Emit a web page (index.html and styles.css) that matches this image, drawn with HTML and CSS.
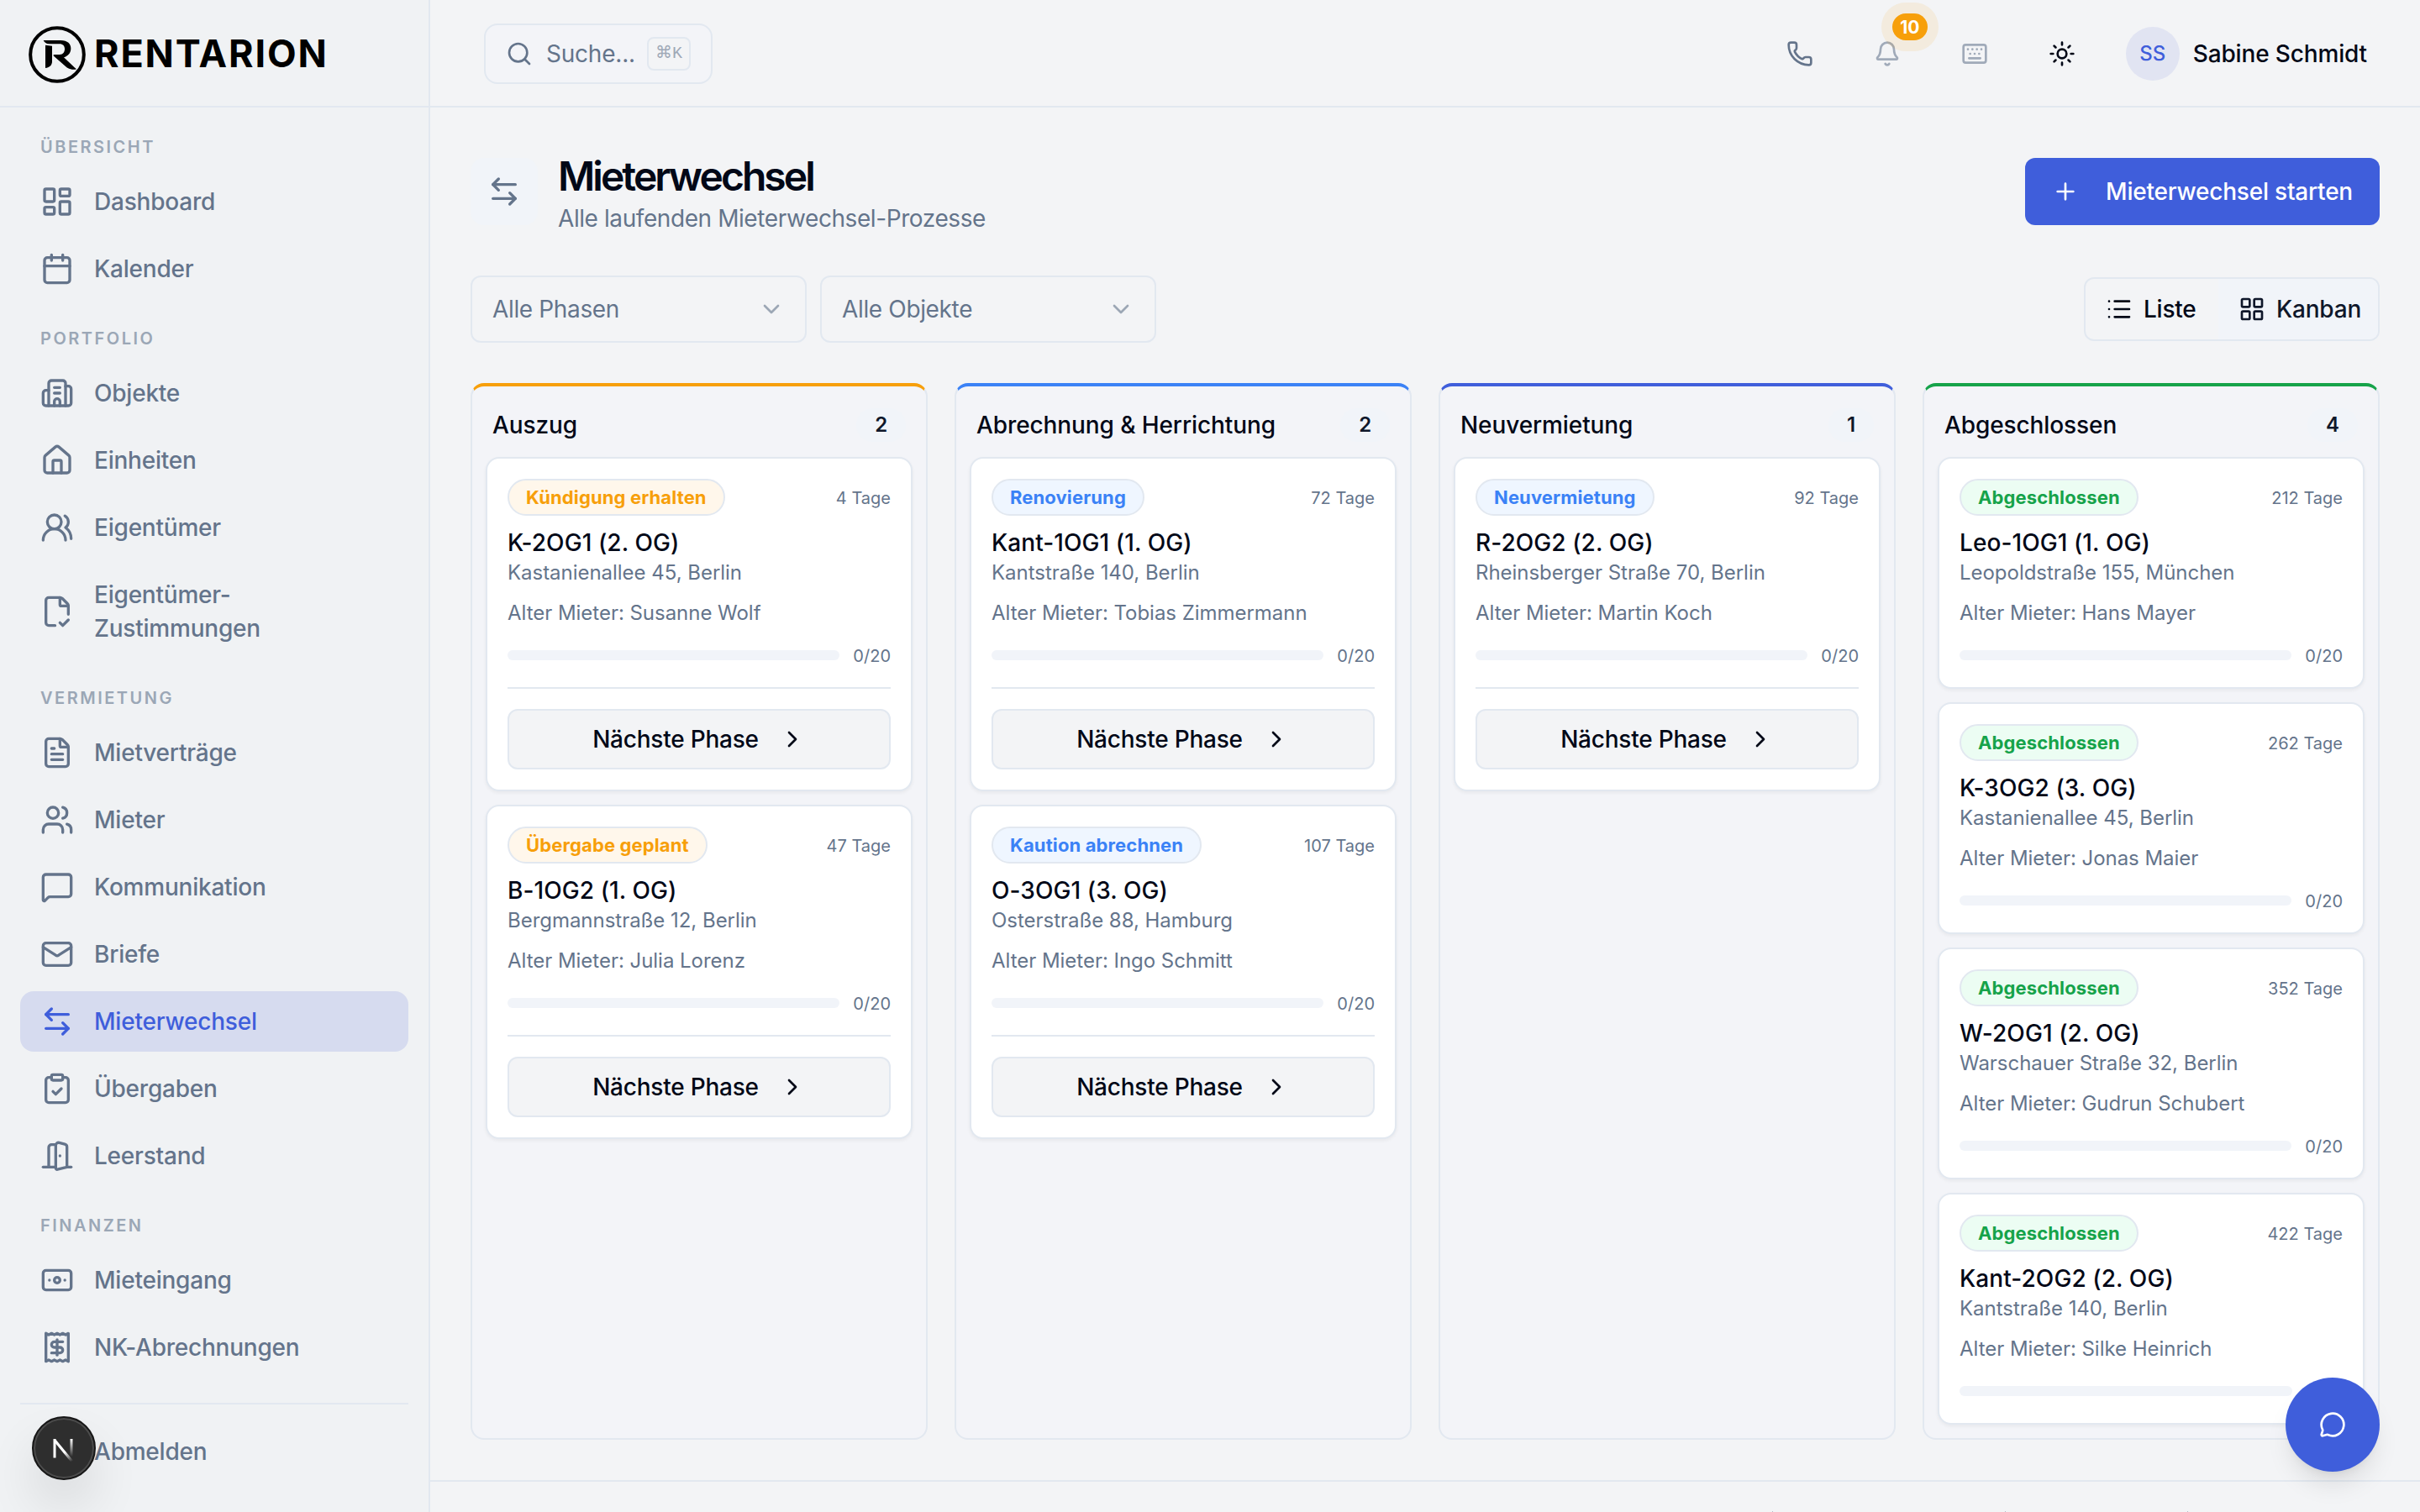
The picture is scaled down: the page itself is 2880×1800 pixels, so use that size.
FILE: index.html
```html
<!DOCTYPE html>
<html lang="de">
<head>
<meta charset="utf-8">
<title>Mieterwechsel – Rentarion</title>
<link rel="stylesheet" href="styles.css">
</head>
<body>
<svg class="sprite" aria-hidden="true">
  <symbol id="i-dashboard" viewBox="0 0 24 24"><rect width="7" height="9" x="3" y="3" rx="1"/><rect width="7" height="5" x="14" y="3" rx="1"/><rect width="7" height="9" x="14" y="12" rx="1"/><rect width="7" height="5" x="3" y="16" rx="1"/></symbol>
  <symbol id="i-calendar" viewBox="0 0 24 24"><path d="M8 2v4M16 2v4"/><rect width="18" height="18" x="3" y="4" rx="2"/><path d="M3 10h18"/></symbol>
  <symbol id="i-building" viewBox="0 0 24 24"><path d="M10 12h4M10 8h4M14 21v-3a2 2 0 0 0-4 0v3"/><path d="M6 10H4a2 2 0 0 0-2 2v7a2 2 0 0 0 2 2h16a2 2 0 0 0 2-2V9a2 2 0 0 0-2-2h-2"/><path d="M6 21V5a2 2 0 0 1 2-2h8a2 2 0 0 1 2 2v16"/></symbol>
  <symbol id="i-house" viewBox="0 0 24 24"><path d="M15 21v-8a1 1 0 0 0-1-1h-4a1 1 0 0 0-1 1v8"/><path d="M3 10a2 2 0 0 1 .709-1.528l7-6a2 2 0 0 1 2.582 0l7 6A2 2 0 0 1 21 10v9a2 2 0 0 1-2 2H5a2 2 0 0 1-2-2z"/></symbol>
  <symbol id="i-owners" viewBox="0 0 24 24"><path d="M18 21a8 8 0 0 0-16 0"/><circle cx="10" cy="8" r="5"/><path d="M22 20c0-3.37-2-6.5-4-8a5 5 0 0 0-.45-8.3"/></symbol>
  <symbol id="i-filecheck" viewBox="0 0 24 24"><path d="M10.5 22H6a2 2 0 0 1-2-2V4a2 2 0 0 1 2-2h8a2.4 2.4 0 0 1 1.706.706l3.588 3.588A2.4 2.4 0 0 1 20 8v6"/><path d="M14 2v5a1 1 0 0 0 1 1h5"/><path d="m14 20 2 2 4-4"/></symbol>
  <symbol id="i-filetext" viewBox="0 0 24 24"><path d="M6 22a2 2 0 0 1-2-2V4a2 2 0 0 1 2-2h8a2.4 2.4 0 0 1 1.704.706l3.588 3.588A2.4 2.4 0 0 1 20 8v12a2 2 0 0 1-2 2z"/><path d="M14 2v5a1 1 0 0 0 1 1h5"/><path d="M10 9H8M16 13H8M16 17H8"/></symbol>
  <symbol id="i-users" viewBox="0 0 24 24"><path d="M16 21v-2a4 4 0 0 0-4-4H6a4 4 0 0 0-4 4v2"/><path d="M16 3.128a4 4 0 0 1 0 7.744"/><path d="M22 21v-2a4 4 0 0 0-3-3.87"/><circle cx="9" cy="7" r="4"/></symbol>
  <symbol id="i-message" viewBox="0 0 24 24"><path d="M22 17a2 2 0 0 1-2 2H6.828a2 2 0 0 0-1.414.586l-2.202 2.202A.71.71 0 0 1 2 21.286V5a2 2 0 0 1 2-2h16a2 2 0 0 1 2 2z"/></symbol>
  <symbol id="i-mail" viewBox="0 0 24 24"><path d="m22 7-8.991 5.727a2 2 0 0 1-2.009 0L2 7"/><rect x="2" y="4" width="20" height="16" rx="2"/></symbol>
  <symbol id="i-swap" viewBox="0 0 24 24"><path d="M8 3 4 7l4 4"/><path d="M4 7h16"/><path d="m16 21 4-4-4-4"/><path d="M20 17H4"/></symbol>
  <symbol id="i-clipboard" viewBox="0 0 24 24"><rect width="8" height="4" x="8" y="2" rx="1"/><path d="M16 4h2a2 2 0 0 1 2 2v14a2 2 0 0 1-2 2H6a2 2 0 0 1-2-2V6a2 2 0 0 1 2-2h2"/><path d="m9 14 2 2 4-4"/></symbol>
  <symbol id="i-door" viewBox="0 0 24 24"><path d="M11 20H2"/><path d="M11 4.562v16.157a1 1 0 0 0 1.242.97L19 20V5.562a2 2 0 0 0-1.515-1.94l-4-1A2 2 0 0 0 11 4.561z"/><path d="M11 4H8a2 2 0 0 0-2 2v14"/><path d="M14 12h.01"/><path d="M22 20h-3"/></symbol>
  <symbol id="i-banknote" viewBox="0 0 24 24"><rect width="20" height="14" x="2" y="5" rx="2"/><circle cx="12" cy="12" r="2"/><path d="M6.500 12h.01M17.500 12h.01"/></symbol>
  <symbol id="i-receipt" viewBox="0 0 24 24"><path d="M4 2v20l2-1 2 1 2-1 2 1 2-1 2 1 2-1 2 1V2l-2 1-2-1-2 1-2-1-2 1-2-1-2 1Z"/><path d="M16 8h-6a2 2 0 1 0 0 4h4a2 2 0 1 1 0 4H8"/><path d="M12 17.500v-11"/></symbol>
  <symbol id="i-logout" viewBox="0 0 24 24"><path d="m16 17 5-5-5-5"/><path d="M21 12H9"/><path d="M9 21H5a2 2 0 0 1-2-2V5a2 2 0 0 1 2-2h4"/></symbol>
  <symbol id="i-search" viewBox="0 0 24 24"><path d="m21 21-4.340-4.340"/><circle cx="11" cy="11" r="8"/></symbol>
  <symbol id="i-phone" viewBox="0 0 24 24"><path d="M13.832 16.568a1 1 0 0 0 1.213-.303l.355-.465A2 2 0 0 1 17 15h3a2 2 0 0 1 2 2v3a2 2 0 0 1-2 2A18 18 0 0 1 2 4a2 2 0 0 1 2-2h3a2 2 0 0 1 2 2v3a2 2 0 0 1-.8 1.600l-.468.351a1 1 0 0 0-.292 1.233 14 14 0 0 0 6.392 6.384"/></symbol>
  <symbol id="i-bell" viewBox="0 0 24 24"><path d="M10.268 21a2 2 0 0 0 3.464 0"/><path d="M3.262 15.326A1 1 0 0 0 4 17h16a1 1 0 0 0 .740-1.673C19.410 13.956 18 12.499 18 8A6 6 0 0 0 6 8c0 4.499-1.411 5.956-2.738 7.326"/></symbol>
  <symbol id="i-keyboard" viewBox="0 0 24 24"><path d="M10 8h.01M12 12h.01M14 8h.01M16 12h.01M18 8h.01M6 8h.01M7 16h10M8 12h.01"/><rect width="20" height="16" x="2" y="4" rx="2"/></symbol>
  <symbol id="i-sun" viewBox="0 0 24 24"><circle cx="12" cy="12" r="4"/><path d="M12 2v2M12 20v2M4.930 4.930l1.410 1.410M17.660 17.660l1.410 1.410M2 12h2M20 12h2M6.340 17.660l-1.410 1.410M19.070 4.930l-1.410 1.410"/></symbol>
  <symbol id="i-plus" viewBox="0 0 24 24"><path d="M5 12h14M12 5v14"/></symbol>
  <symbol id="i-down" viewBox="0 0 24 24"><path d="m6 9 6 6 6-6"/></symbol>
  <symbol id="i-right" viewBox="0 0 24 24"><path d="m9 18 6-6-6-6"/></symbol>
  <symbol id="i-list" viewBox="0 0 24 24"><path d="M3 5h.01M3 12h.01M3 19h.01M8 5h13M8 12h13M8 19h13"/></symbol>
  <symbol id="i-grid" viewBox="0 0 24 24"><rect width="7" height="7" x="3" y="3" rx="1"/><rect width="7" height="7" x="14" y="3" rx="1"/><rect width="7" height="7" x="14" y="14" rx="1"/><rect width="7" height="7" x="3" y="14" rx="1"/></symbol>
  <symbol id="i-chat" viewBox="0 0 24 24"><path d="M2.992 16.342a2 2 0 0 1 .094 1.167l-1.065 3.290a1 1 0 0 0 1.236 1.168l3.413-.998a2 2 0 0 1 1.099.092 10 10 0 1 0-4.777-4.719"/></symbol>
</svg>

<div class="app">
  <aside class="sidebar">
    <div class="brand">
      <svg class="brand-mark" viewBox="42 33 204 204"><circle cx="144" cy="135" r="95.500" fill="none" stroke="#000" stroke-width="12"/><path d="M95 84H156C182 84 193 97 193 113C193 130 182 140 168 145L198 173Q205 180 213 187Q203 190 192 187C184 185 180 182 174 177L132 140Q128 135 134 135H153C165 135 171 126 171 115C171 104 164 97 153 97H115C105 97 99 91 95 84Z"/><path d="M102 101L126 104V160C126 174 115 182 102 183Z"/></svg>
      <span class="brand-name">RENTARION</span>
    </div>
    <nav class="nav">
      <section class="nav-group">
        <h2 class="nav-label">ÜBERSICHT</h2>
        <a class="nav-item"><svg class="icon"><use href="#i-dashboard"/></svg><span>Dashboard</span></a>
        <a class="nav-item"><svg class="icon"><use href="#i-calendar"/></svg><span>Kalender</span></a>
      </section>
      <section class="nav-group">
        <h2 class="nav-label">PORTFOLIO</h2>
        <a class="nav-item"><svg class="icon"><use href="#i-building"/></svg><span>Objekte</span></a>
        <a class="nav-item"><svg class="icon"><use href="#i-house"/></svg><span>Einheiten</span></a>
        <a class="nav-item"><svg class="icon"><use href="#i-owners"/></svg><span>Eigentümer</span></a>
        <a class="nav-item"><svg class="icon"><use href="#i-filecheck"/></svg><span>Eigentümer-<br>Zustimmungen</span></a>
      </section>
      <section class="nav-group">
        <h2 class="nav-label">VERMIETUNG</h2>
        <a class="nav-item"><svg class="icon"><use href="#i-filetext"/></svg><span>Mietverträge</span></a>
        <a class="nav-item"><svg class="icon"><use href="#i-users"/></svg><span>Mieter</span></a>
        <a class="nav-item"><svg class="icon"><use href="#i-message"/></svg><span>Kommunikation</span></a>
        <a class="nav-item"><svg class="icon"><use href="#i-mail"/></svg><span>Briefe</span></a>
        <a class="nav-item active"><svg class="icon"><use href="#i-swap"/></svg><span>Mieterwechsel</span></a>
        <a class="nav-item"><svg class="icon"><use href="#i-clipboard"/></svg><span>Übergaben</span></a>
        <a class="nav-item"><svg class="icon"><use href="#i-door"/></svg><span>Leerstand</span></a>
      </section>
      <section class="nav-group">
        <h2 class="nav-label">FINANZEN</h2>
        <a class="nav-item"><svg class="icon"><use href="#i-banknote"/></svg><span>Mieteingang</span></a>
        <a class="nav-item"><svg class="icon"><use href="#i-receipt"/></svg><span>NK-Abrechnungen</span></a>
      </section>
    </nav>
    <div class="nav-foot">
      <a class="nav-item"><svg class="icon"><use href="#i-logout"/></svg><span>Abmelden</span></a>
    </div>
  </aside>

  <div class="content">
    <header class="topbar">
      <div class="search"><svg class="icon sm"><use href="#i-search"/></svg><span>Suche...</span><kbd>⌘K</kbd></div>
      <div class="actions">
        <button class="icon-btn"><svg class="icon sm"><use href="#i-phone"/></svg></button>
        <button class="icon-btn dim"><svg class="icon sm"><use href="#i-bell"/></svg><span class="count">10</span></button>
        <button class="icon-btn dim"><svg class="icon sm"><use href="#i-keyboard"/></svg></button>
        <button class="icon-btn dark"><svg class="icon sm"><use href="#i-sun"/></svg></button>
        <div class="user"><span class="avatar">SS</span><span>Sabine Schmidt</span></div>
      </div>
    </header>

    <main class="main">
      <div class="page-head">
        <div class="page-icon"><svg class="icon"><use href="#i-swap"/></svg></div>
        <div class="page-titles"><h1>Mieterwechsel</h1><p>Alle laufenden Mieterwechsel-Prozesse</p></div>
        <button class="primary"><svg class="icon sm"><use href="#i-plus"/></svg><span>Mieterwechsel starten</span></button>
      </div>

      <div class="filters">
        <div class="select"><span>Alle Phasen</span><svg class="icon sm"><use href="#i-down"/></svg></div>
        <div class="select"><span>Alle Objekte</span><svg class="icon sm"><use href="#i-down"/></svg></div>
        <div class="toggle">
          <button><svg class="icon sm"><use href="#i-list"/></svg>Liste</button>
          <button class="on"><svg class="icon sm"><use href="#i-grid"/></svg>Kanban</button>
        </div>
      </div>

      <div class="board">
        <section class="column orange">
          <header><h3>Auszug</h3><span class="num">2</span></header>
          <article class="card">
            <div class="card-top"><span class="tag">Kündigung erhalten</span><span class="days">4 Tage</span></div>
            <h4>K-2OG1 (2. OG)</h4><p class="address">Kastanienallee 45, Berlin</p><p class="tenant">Alter Mieter: Susanne Wolf</p>
            <div class="progress"><span class="track"></span><span class="steps">0/20</span></div>
            <div class="card-foot"><button class="next">Nächste Phase<svg class="icon sm"><use href="#i-right"/></svg></button></div>
          </article>
          <article class="card">
            <div class="card-top"><span class="tag">Übergabe geplant</span><span class="days">47 Tage</span></div>
            <h4>B-1OG2 (1. OG)</h4><p class="address">Bergmannstraße 12, Berlin</p><p class="tenant">Alter Mieter: Julia Lorenz</p>
            <div class="progress"><span class="track"></span><span class="steps">0/20</span></div>
            <div class="card-foot"><button class="next">Nächste Phase<svg class="icon sm"><use href="#i-right"/></svg></button></div>
          </article>
        </section>

        <section class="column blue">
          <header><h3>Abrechnung &amp; Herrichtung</h3><span class="num">2</span></header>
          <article class="card">
            <div class="card-top"><span class="tag">Renovierung</span><span class="days">72 Tage</span></div>
            <h4>Kant-1OG1 (1. OG)</h4><p class="address">Kantstraße 140, Berlin</p><p class="tenant">Alter Mieter: Tobias Zimmermann</p>
            <div class="progress"><span class="track"></span><span class="steps">0/20</span></div>
            <div class="card-foot"><button class="next">Nächste Phase<svg class="icon sm"><use href="#i-right"/></svg></button></div>
          </article>
          <article class="card">
            <div class="card-top"><span class="tag">Kaution abrechnen</span><span class="days">107 Tage</span></div>
            <h4>O-3OG1 (3. OG)</h4><p class="address">Osterstraße 88, Hamburg</p><p class="tenant">Alter Mieter: Ingo Schmitt</p>
            <div class="progress"><span class="track"></span><span class="steps">0/20</span></div>
            <div class="card-foot"><button class="next">Nächste Phase<svg class="icon sm"><use href="#i-right"/></svg></button></div>
          </article>
        </section>

        <section class="column blue indigo">
          <header><h3>Neuvermietung</h3><span class="num">1</span></header>
          <article class="card">
            <div class="card-top"><span class="tag">Neuvermietung</span><span class="days">92 Tage</span></div>
            <h4>R-2OG2 (2. OG)</h4><p class="address">Rheinsberger Straße 70, Berlin</p><p class="tenant">Alter Mieter: Martin Koch</p>
            <div class="progress"><span class="track"></span><span class="steps">0/20</span></div>
            <div class="card-foot"><button class="next">Nächste Phase<svg class="icon sm"><use href="#i-right"/></svg></button></div>
          </article>
        </section>

        <section class="column green">
          <header><h3>Abgeschlossen</h3><span class="num">4</span></header>
          <article class="card">
            <div class="card-top"><span class="tag">Abgeschlossen</span><span class="days">212 Tage</span></div>
            <h4>Leo-1OG1 (1. OG)</h4><p class="address">Leopoldstraße 155, München</p><p class="tenant">Alter Mieter: Hans Mayer</p>
            <div class="progress"><span class="track"></span><span class="steps">0/20</span></div>
          </article>
          <article class="card">
            <div class="card-top"><span class="tag">Abgeschlossen</span><span class="days">262 Tage</span></div>
            <h4>K-3OG2 (3. OG)</h4><p class="address">Kastanienallee 45, Berlin</p><p class="tenant">Alter Mieter: Jonas Maier</p>
            <div class="progress"><span class="track"></span><span class="steps">0/20</span></div>
          </article>
          <article class="card">
            <div class="card-top"><span class="tag">Abgeschlossen</span><span class="days">352 Tage</span></div>
            <h4>W-2OG1 (2. OG)</h4><p class="address">Warschauer Straße 32, Berlin</p><p class="tenant">Alter Mieter: Gudrun Schubert</p>
            <div class="progress"><span class="track"></span><span class="steps">0/20</span></div>
          </article>
          <article class="card">
            <div class="card-top"><span class="tag">Abgeschlossen</span><span class="days">422 Tage</span></div>
            <h4>Kant-2OG2 (2. OG)</h4><p class="address">Kantstraße 140, Berlin</p><p class="tenant">Alter Mieter: Silke Heinrich</p>
            <div class="progress"><span class="track"></span><span class="under-fab"></span></div>
          </article>
        </section>
      </div>
    </main>
    <footer class="footer"><i></i><i></i><i></i></footer>
  </div>
</div>

<div class="dev-badge"><svg viewBox="0 0 76 76"><defs><linearGradient id="fade-a" gradientUnits="userSpaceOnUse" x1="42" y1="41" x2="49" y2="53"><stop stop-color="#fff"/><stop offset="1" stop-color="#fff" stop-opacity="0"/></linearGradient><linearGradient id="fade-b" x1="0" y1="0" x2="0" y2="1"><stop stop-color="#fff"/><stop offset="1" stop-color="#fff" stop-opacity="0"/></linearGradient></defs><rect x="25.500" y="27" width="3" height="22.500" fill="#fff"/><path d="M27 28.500 48 54" stroke="url(#fade-a)" stroke-width="3.200" fill="none"/><rect x="45.500" y="27" width="3" height="21" fill="url(#fade-b)"/></svg></div>
<button class="fab"><svg class="icon sm"><use href="#i-chat"/></svg></button>
</body>
</html>
```
FILE: styles.css
```css
* { box-sizing: border-box; }
h1, h2, h3, h4, p { margin: 0; font-size: inherit; font-weight: inherit; }
button { font: inherit; color: inherit; border: 0; background: none; padding: 0; letter-spacing: inherit; }

body {
  margin: 0;
  width: 2880px;
  height: 1800px;
  overflow: hidden;
  background: #f3f4f6;
  color: #020817;
  font: 400 28px/40px Inter, "Liberation Sans", sans-serif;
  letter-spacing: -0.22px;
}

.sprite { display: none; }
.icon {
  width: 40px;
  height: 40px;
  flex: none;
  fill: none;
  stroke: currentColor;
  stroke-width: 2;
  stroke-linecap: round;
  stroke-linejoin: round;
}
.icon.sm { width: 32px; height: 32px; }

.app { display: flex; height: 1800px; }

/* Sidebar */
.sidebar {
  width: 512px;
  flex: none;
  display: flex;
  flex-direction: column;
  background: #f0f2f4;
  border-right: 2px solid #e2e8f0;
}
.brand {
  height: 128px;
  display: flex;
  align-items: center;
  gap: 10px;
  padding: 4px 34px 0;
  border-bottom: 2px solid #e2e8f0;
}
.brand-mark { width: 68px; height: 68px; }
.brand-name { padding-bottom: 2px; color: #000; font-size: 45px; font-weight: 650; letter-spacing: 1.85px; }
.nav { display: flex; flex-direction: column; gap: 32px; padding: 32px 24px 30px; }
.nav-group { display: flex; flex-direction: column; gap: 8px; }
.nav-label {
  height: 28px;
  margin-bottom: 8px;
  padding-left: 24px;
  color: #9ba7b6;
  font-size: 20px;
  font-weight: 600;
  line-height: 30px;
  letter-spacing: 2.5px;
}
.nav-item {
  display: flex;
  align-items: center;
  gap: 24px;
  padding: 16px 24px;
  border-radius: 16px;
  color: #64748b;
  font-weight: 500;
}
.nav-item.active { background: #d6dbef; color: #3f5edb; }
.nav-foot { margin: 0 24px; padding-top: 20px; border-top: 2px solid #e2e8f0; }

/* Top bar */
.content { flex: 1; min-width: 0; display: flex; flex-direction: column; }
.topbar {
  height: 128px;
  flex: none;
  display: flex;
  align-items: center;
  justify-content: space-between;
  padding: 2px 63px 0 64px;
  border-bottom: 2px solid #e2e8f0;
}
.search {
  height: 72px;
  display: flex;
  align-items: center;
  gap: 16px;
  padding: 0 24px;
  border: 2px solid #e2e8f0;
  border-radius: 16px;
  background: #f3f4f8;
  color: #64748b;
}
.search span { width: 104px; }
kbd {
  width: 52px;
  height: 40px;
  border: 2px solid #e2e8f0;
  border-radius: 8px;
  background: #f3f4f6;
  color: #9fa9b7;
  font: 20px/36px "Liberation Mono", "DejaVu Sans", monospace;
  letter-spacing: 0;
  text-align: center;
  white-space: nowrap;
}
.actions { display: flex; align-items: center; gap: 32px; color: #64748b; }
.icon-btn { position: relative; width: 72px; height: 72px; display: grid; place-items: center; }
.icon-btn.dim { color: #a0aab9; }
.icon-btn.dark { color: #020817; }
.count {
  position: absolute;
  left: 42px;
  top: -12px;
  width: 42px;
  height: 32px;
  border-radius: 16px;
  background: #f79f0a;
  box-shadow: 0 0 0 13px rgba(247, 159, 10, 0.1);
  color: #fff;
  font-size: 21px;
  font-weight: 700;
  line-height: 33px;
}
.user { display: flex; align-items: center; gap: 16px; margin-left: 8px; color: #020817; font-weight: 500; letter-spacing: -0.15px; }
.avatar {
  width: 64px;
  height: 64px;
  border-radius: 50%;
  background: #e1e4f2;
  color: #3f5edb;
  font-size: 24px;
  line-height: 64px;
  text-align: center;
}

/* Page heading */
.main { padding: 48px 48px 48px; }
.page-head { display: flex; align-items: center; gap: 24px; height: 104px; }
.page-icon {
  width: 80px;
  height: 80px;
  display: grid;
  place-items: center;
  border-radius: 16px;
  background: #f1f4f9;
  color: #64748b;
}
.page-titles { flex: 1; padding-top: 3px; color: #64748b; letter-spacing: -0.42px; }
.page-titles h1 { color: #020817; font-size: 48px; font-weight: 600; line-height: 61px; letter-spacing: -2.95px; }
.primary {
  width: 422px;
  height: 80px;
  display: flex;
  align-items: center;
  justify-content: space-between;
  padding: 0 32px;
  border-radius: 12px;
  background: #3f5edb;
  color: #fff;
  font-weight: 500;
}

/* Filters */
.filters { display: flex; align-items: center; gap: 16px; margin: 48px 0; }
.select {
  width: 400px;
  height: 80px;
  display: flex;
  align-items: center;
  justify-content: space-between;
  padding: 0 24px;
  border: 2px solid #e2e8f0;
  border-radius: 12px;
  color: #64748b;
  letter-spacing: -0.35px;
}
.select .icon { opacity: 0.6; }
.toggle {
  display: flex;
  width: 352px;
  margin-left: auto;
  border: 2px solid #e2e8f0;
  border-radius: 12px;
  overflow: hidden;
  font-weight: 500;
}
.toggle button { width: 158px; height: 72px; display: flex; align-items: center; gap: 13px; padding-left: 24px; }
.toggle .on { width: auto; flex: 1; background: #f1f4f9; color: #0f172a; }

/* Board */
.board { display: grid; grid-template-columns: repeat(4, 1fr); gap: 32px; height: 1258px; }
.column {
  --accent: #f79f0a;
  display: flex;
  flex-direction: column;
  gap: 16px;
  padding: 16px;
  border: 2px solid #e2e8f0;
  border-top: 4px solid var(--accent);
  border-radius: 16px;
  background: #f3f4f8;
}
.column.orange { --tag: #fff7eb; }
.column.blue { --accent: #3b82f6; --tag: #eff6ff; }
.column.green { --accent: #16a34a; --tag: #ecfdf3; }
.column.indigo { border-top-color: #3f5edb; }
.column header {
  height: 52px;
  display: flex;
  align-items: center;
  justify-content: space-between;
  padding: 8px 8px 0;
  font-weight: 500;
  letter-spacing: -0.1px;
}
.num {
  padding: 0 22px;
  border-radius: 20px;
  background: #f1f4f9;
  color: #0f172a;
  font-size: 24px;
  font-weight: 600;
}
.card {
  padding: 24px;
  border: 2px solid #e2e8f0;
  border-radius: 16px;
  background: #fff;
  box-shadow: 0 2px 4px rgba(0, 0, 0, 0.05);
}
.card-top { display: flex; align-items: center; justify-content: space-between; height: 44px; }
.tag {
  height: 44px;
  padding: 0 20px;
  border: 2px solid #e2e8f0;
  border-radius: 22px;
  background: var(--tag);
  color: var(--accent);
  font-size: 22px;
  font-weight: 650;
  line-height: 40px;
  letter-spacing: 0.12px;
}
.days, .progress { color: #64748b; font-size: 20px; letter-spacing: 0; }
.days { line-height: 32px; padding-top: 2px; }
.card h4 { margin-top: 12px; font-weight: 500; letter-spacing: 0.08px; }
.address, .tenant { color: #64748b; font-size: 24px; line-height: 32px; letter-spacing: -0.03px; }
.tenant { margin-top: 16px; }
.progress { display: flex; align-items: center; gap: 16px; height: 28px; margin-top: 20px; line-height: 28px; }
.track { flex: 1; height: 12px; border-radius: 6px; background: #f1f4f9; }
.steps { padding-top: 2px; }
.under-fab { width: 44px; }
.card-foot { margin-top: 24px; padding-top: 24px; border-top: 2px solid #e2e8f0; }
.next {
  width: 100%;
  height: 72px;
  display: flex;
  align-items: center;
  justify-content: center;
  gap: 24px;
  border: 2px solid #e2e8f0;
  border-radius: 12px;
  background: #f3f4f6;
  font-weight: 500;
}

/* Footer starts at the lower window edge */
.footer { display: flex; padding: 35px 0 0 1597px; border-top: 2px solid #e2e8f0; color: #b4bac5; }
.footer i { width: 6px; height: 1px; margin-right: 276px; background: currentColor; }
.footer i:nth-child(2) { margin-right: 216px; }

/* Floating controls */
.dev-badge {
  position: absolute;
  left: 38px;
  top: 1686px;
  width: 76px;
  height: 76px;
  border: 2px solid #171717;
  border-radius: 50%;
  background: #2e2e2e;
  box-shadow: inset 0 0 0 2px #4c4c4c, 0 32px 64px -8px rgba(0, 0, 0, 0.16);
}
.dev-badge svg { display: block; width: 76px; height: 76px; margin: -2px; }
.fab {
  position: absolute;
  left: 2720px;
  top: 1640px;
  width: 112px;
  height: 112px;
  display: grid;
  place-items: center;
  border-radius: 50%;
  background: #3f5edb;
  color: #fff;
  box-shadow: 0 20px 30px -6px rgba(0, 0, 0, 0.1), 0 8px 12px -8px rgba(0, 0, 0, 0.1);
}
```
